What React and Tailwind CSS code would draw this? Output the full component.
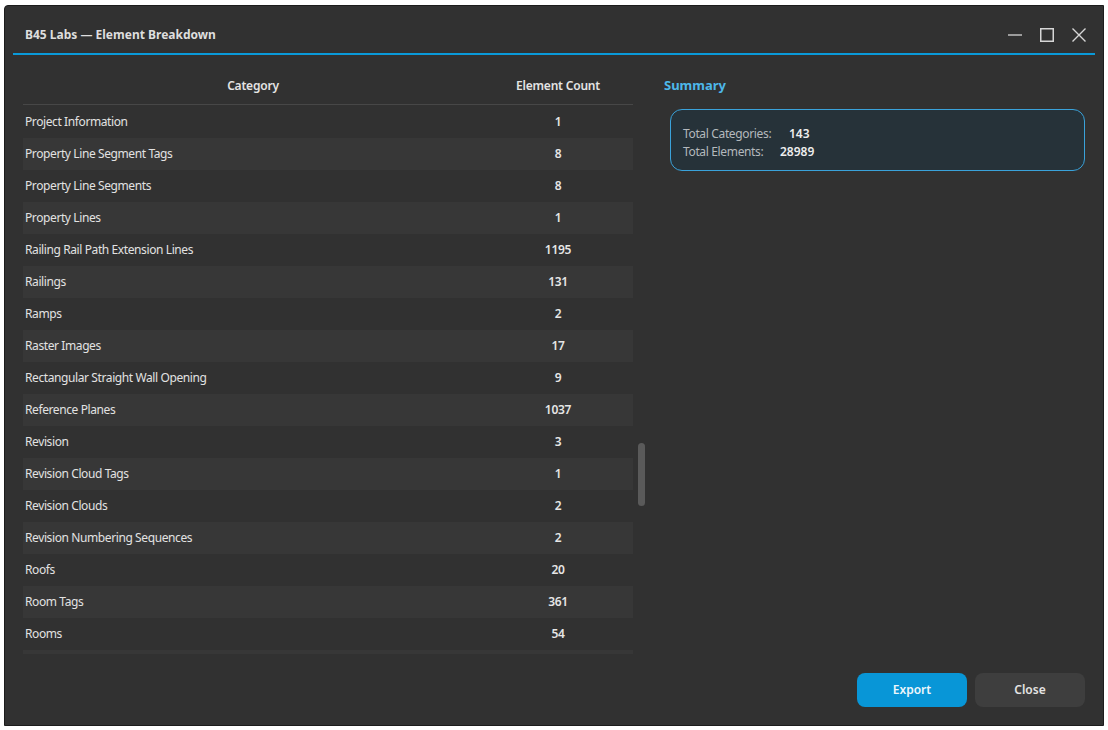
import React from "react";

const rows = [
  ["Project Information", "1"],
  ["Property Line Segment Tags", "8"],
  ["Property Line Segments", "8"],
  ["Property Lines", "1"],
  ["Railing Rail Path Extension Lines", "1195"],
  ["Railings", "131"],
  ["Ramps", "2"],
  ["Raster Images", "17"],
  ["Rectangular Straight Wall Opening", "9"],
  ["Reference Planes", "1037"],
  ["Revision", "3"],
  ["Revision Cloud Tags", "1"],
  ["Revision Clouds", "2"],
  ["Revision Numbering Sequences", "2"],
  ["Roofs", "20"],
  ["Room Tags", "361"],
  ["Rooms", "54"],
  ["", ""],
];

export default function App() {
  return (
    <div className="w-[1108px] h-[730px] bg-white pt-[5px] pl-[4px]" style={{ fontFamily: '"Noto Sans", "Open Sans", sans-serif' }}>
      <div className="w-[1100px] h-[721px] bg-[#313131] border border-[#1c1c1c] rounded-tl-[4px] flex flex-col text-[#e2e2e2]">
        {/* Title bar */}
        <div className="h-[47px] flex items-center pl-[20px] pr-[17px] shrink-0">
          <div className="text-[12px] font-bold text-[#dedede] mt-[10px]">B45 Labs — Element Breakdown</div>
          <div className="ml-auto flex items-center gap-[18px] mt-[10px] text-[#d6d6d6]">
            <svg width="14" height="14" viewBox="0 0 14 14"><line x1="0" y1="7" x2="14" y2="7" stroke="currentColor" strokeWidth="1.3" /></svg>
            <svg width="14" height="14" viewBox="0 0 14 14"><rect x="0.75" y="0.75" width="12.5" height="12.5" fill="none" stroke="currentColor" strokeWidth="1.5" /></svg>
            <svg width="14" height="14" viewBox="0 0 14 14"><path d="M0.5 0.5 L13.5 13.5 M13.5 0.5 L0.5 13.5" stroke="currentColor" strokeWidth="1.4" /></svg>
          </div>
        </div>
        <div className="mx-[8px] h-[2px] bg-[#0a9ad9] shrink-0" />

        {/* Body */}
        <div className="flex flex-1 min-h-0 pl-[18px] pr-[18px] pt-[13px]">
          {/* Table */}
          <div className="w-[610px] flex flex-col shrink-0">
            <div className="h-[37px] flex items-center border-b border-[#474747] text-[12px] font-semibold text-[#e4e4e4] tracking-[-0.2px]">
              <div className="w-[460px] text-center">Category</div>
              <div className="w-[150px] text-center">Element Count</div>
            </div>
            <div className="h-[548px] mt-[1px] overflow-hidden">
              {rows.map(([name, count], i) => (
                <div key={i} className={`h-[32px] flex items-center text-[12px] ${i % 2 === 1 ? "bg-[#373737]" : ""}`}>
                  <div className="w-[460px] pl-[2px] text-[#e2e2e2] tracking-[-0.4px]">{name}</div>
                  <div className="w-[150px] text-center font-semibold text-[#e6e6e6] tracking-[-0.3px]">{count}</div>
                </div>
              ))}
            </div>
          </div>
          {/* Scrollbar */}
          <div className="w-[31px] relative shrink-0">
            <div className="absolute left-[5px] top-[375px] w-[7px] h-[63px] rounded-full bg-[#5a5a5a]" />
          </div>
          {/* Right panel */}
          <div className="flex-1 flex flex-col">
            <div className="h-[36px] flex items-center text-[13px] font-bold text-[#4db8ea]">Summary</div>
            <div className="ml-[6px] mt-[5px] h-[62px] rounded-[12px] border border-[#3aa2da] bg-[#263239] px-[12px] pt-[5px] flex flex-col justify-center text-[12px] leading-[18px]">
              <div className="flex"><span className="w-[106px] text-[#b4b9bd] tracking-[-0.35px]">Total Categories:</span><span className="font-semibold text-[#eeeeee]">143</span></div>
              <div className="flex"><span className="w-[97px] text-[#b4b9bd] tracking-[-0.35px]">Total Elements:</span><span className="font-semibold text-[#eeeeee]">28989</span></div>
            </div>
            <div className="flex-1" />
            <div className="flex justify-end gap-[8px] mb-[18px]">
              <button className="w-[110px] h-[34px] rounded-[8px] bg-[#0896d7] text-[12px] font-semibold text-[#eef6fb]">Export</button>
              <button className="w-[110px] h-[34px] rounded-[8px] bg-[#3e3e3e] text-[12px] font-semibold text-[#e4e4e4]">Close</button>
            </div>
          </div>
        </div>
      </div>
    </div>
  );
}
